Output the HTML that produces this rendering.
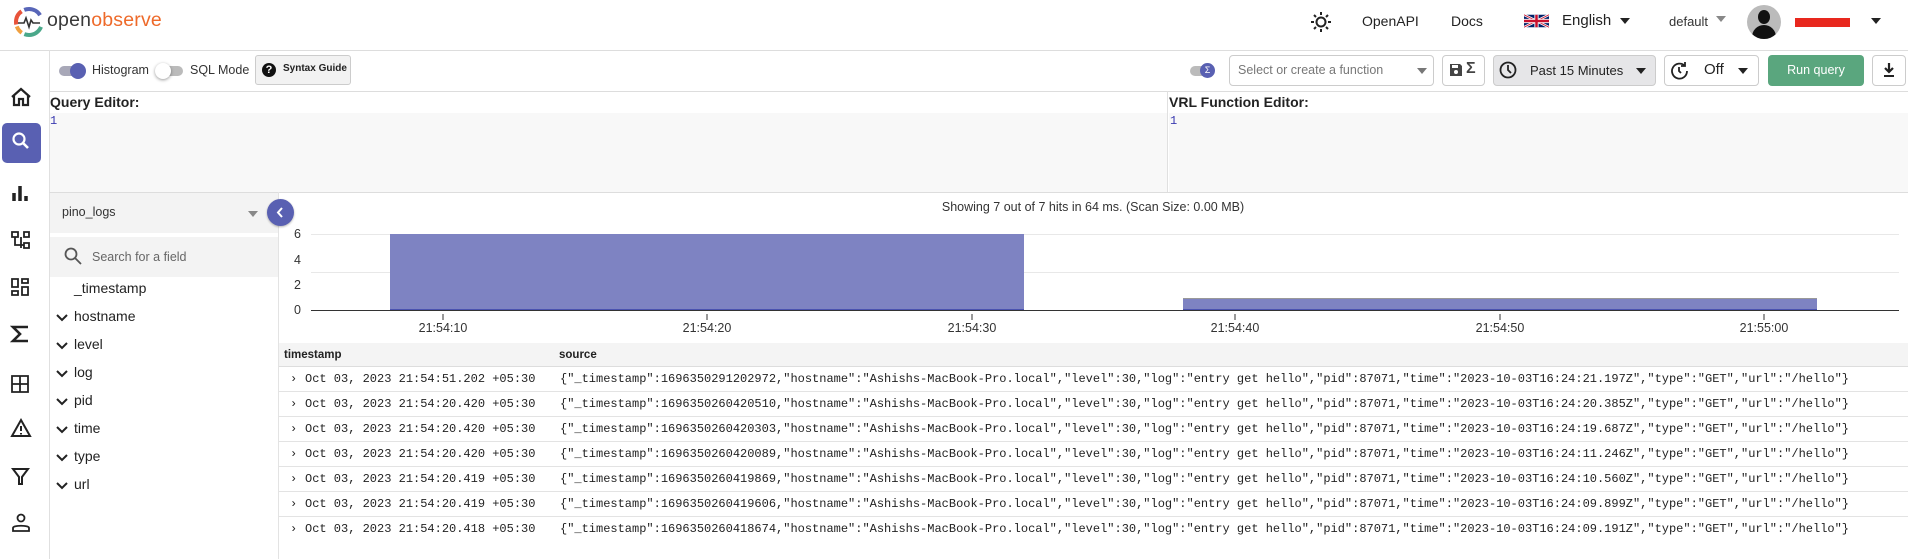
<!DOCTYPE html>
<html><head><meta charset="utf-8"><style>
*{margin:0;padding:0;box-sizing:border-box}
body{width:1908px;height:559px;overflow:hidden;background:#fff;font-family:"Liberation Sans",sans-serif;color:#222;position:relative}
.a{position:absolute}
.mono{font-family:"Liberation Mono",monospace;font-size:12px;color:#222;white-space:pre;line-height:25px;position:absolute}
.fld{position:absolute;left:56px;font-size:14px;color:#222}
.row{position:absolute;left:279px;width:1629px;height:25px;border-bottom:1px solid #e3e3e3}
</style></head><body>
<!-- header -->
<svg class="a" style="left:13px;top:6px" width="32" height="32" viewBox="0 0 32 32">
<circle cx="16" cy="16" r="13" fill="none" stroke="#4aa88a" stroke-width="4" stroke-dasharray="20 62" stroke-dashoffset="-5"/>
<circle cx="16" cy="16" r="13" fill="none" stroke="#e8533a" stroke-width="4" stroke-dasharray="15 67" stroke-dashoffset="-38"/>
<circle cx="16" cy="16" r="13" fill="none" stroke="#5866b8" stroke-width="4" stroke-dasharray="18 64" stroke-dashoffset="-56"/>
<circle cx="16" cy="16" r="13" fill="none" stroke="#f0a040" stroke-width="4" stroke-dasharray="8 74" stroke-dashoffset="-28"/>
<path d="M5 17h6l2-5 3 9 2-7 2 3h7" fill="none" stroke="#333" stroke-width="1.6"/>
</svg>
<div class="a" style="left:47px;top:9px;font-size:19.5px;letter-spacing:0.2px"><span style="color:#3a3a3a">open</span><span style="color:#ee6a2a">observe</span></div>
<svg class="a" style="left:1310px;top:11px" width="22" height="22" viewBox="0 0 22 22"><circle cx="11" cy="11" r="4.5" fill="none" stroke="#222" stroke-width="2"/><g stroke="#222" stroke-width="2"><path d="M11 1v3M11 18v3M1 11h3M18 11h3M4 4l2 2M16 16l2 2M4 18l2-2M16 6l2-2"/></g></svg>
<div class="a" style="left:1362px;top:13px;font-size:14px">OpenAPI</div>
<div class="a" style="left:1451px;top:13px;font-size:14px">Docs</div>
<svg class="a" style="left:1524px;top:12px" width="25" height="18" viewBox="0 0 60 30"><rect width="60" height="30" fill="#012169"/><path d="M0 0L60 30M60 0L0 30" stroke="#fff" stroke-width="6"/><path d="M0 0L60 30M60 0L0 30" stroke="#C8102E" stroke-width="2"/><path d="M30 0v30M0 15h60" stroke="#fff" stroke-width="10"/><path d="M30 0v30M0 15h60" stroke="#C8102E" stroke-width="6"/></svg>
<div class="a" style="left:1562px;top:12px;font-size:15px">English</div>
<div class="a" style="left:1620px;top:18px;border:5px solid transparent;border-top:6px solid #222"></div>
<div class="a" style="left:1669px;top:14px;font-size:13px;color:#333">default</div>
<div class="a" style="left:1716px;top:16px;border:5px solid transparent;border-top:6px solid #888"></div>
<div class="a" style="left:1747px;top:5px;width:34px;height:34px;border-radius:50%;background:#bbb;overflow:hidden"><div class="a" style="left:11px;top:5px;width:12px;height:14px;border-radius:50%;background:#111"></div><div class="a" style="left:5px;top:20px;width:24px;height:18px;border-radius:12px 12px 0 0;background:#111"></div></div>
<div class="a" style="left:1795px;top:18px;width:55px;height:9px;background:#e8281e"></div>
<div class="a" style="left:1871px;top:18px;border:5px solid transparent;border-top:6px solid #222"></div>
<div class="a" style="left:0;top:50px;width:1908px;height:1px;background:#ddd"></div>
<!-- sidebar -->
<div class="a" style="left:49px;top:50px;width:1px;height:509px;background:#e0e0e0"></div>
<div class="a" style="left:2px;top:123px;width:39px;height:40px;border-radius:5px;background:#5960b2"></div>
<svg class="a" style="left:0;top:80px" width="42" height="470" viewBox="0 0 42 470" fill="none" stroke="#222" stroke-width="2.2">
<path d="M12 17l9-8 9 8M14 15v10h5v-6h4v6h5V15"/>
<circle cx="19" cy="59" r="5.5" stroke="#fff"/><path d="M23 63l5 5" stroke="#fff" stroke-width="2.6"/>
<path d="M14 121v-8M20 121v-15M26 121v-5" stroke-width="3.5"/>
<path d="M12 152h6v5h-6zM24 152h5v5h-5zM24 163h5v5h-5zM15 157v8h9M21 157v11" stroke-width="1.8"/>
<path d="M12 199h6v8h-6zM22 199h6v4h-6zM12 211h6v4h-6zM22 207h6v8h-6z" stroke-width="1.8"/>
<path d="M28 247H13l7 7-7 7h15" stroke-width="2.6"/>
<path d="M12 296h16v16H12zM20 296v16M12 304h16" stroke-width="1.8"/>
<path d="M21 340l9 16H12z M21 346v5M21 353v1.5" stroke-width="2"/>
<path d="M13 389h15l-6 8v7h-3v-7z" stroke-width="2"/>
<circle cx="21" cy="438" r="3.5" stroke-width="1.8"/><path d="M13 451v-3c0-3 16-3 16 0v3z" stroke-width="1.8"/>
</svg>
<!-- toolbar -->
<div class="a" style="left:59px;top:66px;width:26px;height:10px;border-radius:5px;background:#a8a8b8"></div>
<div class="a" style="left:70px;top:63px;width:16px;height:16px;border-radius:50%;background:#5960b2"></div>
<div class="a" style="left:92px;top:63px;font-size:12.5px;color:#333">Histogram</div>
<div class="a" style="left:157px;top:66px;width:26px;height:10px;border-radius:5px;background:#bbb"></div>
<div class="a" style="left:155px;top:63px;width:16px;height:16px;border-radius:50%;background:#fff;box-shadow:0 1px 3px rgba(0,0,0,.4)"></div>
<div class="a" style="left:190px;top:63px;font-size:12.5px;color:#333">SQL Mode</div>
<div class="a" style="left:255px;top:55px;width:96px;height:30px;border:1px solid #ccc;border-radius:3px;background:#f2f2f2"></div>
<div class="a" style="left:262px;top:63px;width:14px;height:14px;border-radius:50%;background:#111;color:#fff;font-size:11px;font-weight:bold;text-align:center;line-height:14px">?</div>
<div class="a" style="left:283px;top:63px;font-size:10px;font-weight:bold;color:#222">Syntax Guide</div>
<div class="a" style="left:1190px;top:66px;width:20px;height:10px;border-radius:5px;background:#bbb"></div>
<div class="a" style="left:1200px;top:63px;width:15px;height:15px;border-radius:50%;background:#5960b2;color:#fff;font-size:9px;text-align:center;line-height:15px">Σ</div>
<div class="a" style="left:1229px;top:55px;width:205px;height:31px;border:1px solid #ccc;border-radius:4px"></div>
<div class="a" style="left:1238px;top:63px;font-size:12.5px;color:#777">Select or create a function</div>
<div class="a" style="left:1417px;top:68px;border:5px solid transparent;border-top:6px solid #777"></div>
<div class="a" style="left:1442px;top:55px;width:43px;height:31px;border:1px solid #ccc;border-radius:4px"></div>
<svg class="a" style="left:1449px;top:63px" width="14" height="14" viewBox="0 0 14 14"><path d="M1 1h10l2 2v10H1z" fill="#444"/><rect x="3" y="2" width="6" height="3" fill="#fff"/><circle cx="7" cy="9" r="2" fill="#fff"/></svg>
<div class="a" style="left:1466px;top:60px;font-size:16px;font-weight:bold;color:#444">Σ</div>
<div class="a" style="left:1493px;top:55px;width:163px;height:31px;border:1px solid #ccc;border-radius:4px;background:#e6e6e8"></div>
<svg class="a" style="left:1499px;top:61px" width="18" height="18" viewBox="0 0 18 18" fill="none" stroke="#222" stroke-width="1.8"><circle cx="9" cy="9" r="7.5"/><path d="M9 4v5l3 3"/></svg>
<div class="a" style="left:1530px;top:63px;font-size:13px;color:#222">Past 15 Minutes</div>
<div class="a" style="left:1636px;top:68px;border:5px solid transparent;border-top:6px solid #222"></div>
<div class="a" style="left:1664px;top:55px;width:95px;height:31px;border:1px solid #ccc;border-radius:4px"></div>
<svg class="a" style="left:1670px;top:61px" width="19" height="19" viewBox="0 0 19 19" fill="none" stroke="#222" stroke-width="1.8"><path d="M15 5A7.5 7.5 0 1 0 17 10"/><path d="M15 1v4h-4"/><path d="M9 6v4l2 2"/></svg>
<div class="a" style="left:1704px;top:61px;font-size:15px;color:#222">Off</div>
<div class="a" style="left:1738px;top:68px;border:5px solid transparent;border-top:6px solid #222"></div>
<div class="a" style="left:1768px;top:55px;width:96px;height:31px;border-radius:4px;background:#5aa67e;color:#fff;font-size:12.5px;text-align:center;line-height:31px">Run query</div>
<div class="a" style="left:1872px;top:55px;width:34px;height:31px;border:1px solid #ccc;border-radius:4px"></div>
<svg class="a" style="left:1882px;top:62px" width="14" height="16" viewBox="0 0 14 16"><path d="M7 1v9M3 6l4 4 4-4" stroke="#222" stroke-width="2.2" fill="none"/><path d="M2 14h10" stroke="#222" stroke-width="2"/></svg>
<div class="a" style="left:49px;top:91px;width:1859px;height:1px;background:#ddd"></div>
<!-- editors -->
<div class="a" style="left:50px;top:94px;font-size:14px;font-weight:bold;color:#222">Query Editor:</div>
<div class="a" style="left:1169px;top:94px;font-size:14px;font-weight:bold;color:#222">VRL Function Editor:</div>
<div class="a" style="left:50px;top:113px;width:1117px;height:79px;background:#f8f8f8"></div>
<div class="a" style="left:1169px;top:113px;width:739px;height:79px;background:#f8f8f8"></div>
<div class="a" style="left:1167px;top:91px;width:1px;height:101px;background:#e0e0e0"></div>
<div class="a" style="left:50px;top:114px;color:#3a3ab0;font-family:'Liberation Mono',monospace;font-size:12px">1</div>
<div class="a" style="left:1170px;top:114px;color:#3a3ab0;font-family:'Liberation Mono',monospace;font-size:12px">1</div>
<div class="a" style="left:49px;top:192px;width:1859px;height:1px;background:#ddd"></div>
<!-- field list -->
<div class="a" style="left:50px;top:193px;width:228px;height:40px;background:#f3f3f3"></div>
<div class="a" style="left:62px;top:205px;font-size:12.5px;color:#333">pino_logs</div>
<div class="a" style="left:248px;top:211px;border:5px solid transparent;border-top:6px solid #888"></div>
<div class="a" style="left:50px;top:237px;width:228px;height:40px;background:#f3f3f3"></div>
<svg class="a" style="left:64px;top:247px" width="18" height="18" viewBox="0 0 18 18" fill="none" stroke="#555" stroke-width="1.8"><circle cx="7" cy="7" r="5.5"/><path d="M11 11l6 6"/></svg>
<div class="a" style="left:92px;top:250px;font-size:12.5px;color:#666">Search for a field</div>
<div class="a" style="left:278px;top:192px;width:1px;height:367px;background:#e3e3e3"></div>
<div class="a" style="left:267px;top:199px;width:27px;height:27px;border-radius:50%;background:#5960b2;box-shadow:0 1px 2px rgba(0,0,0,.3)"></div>
<svg class="a" style="left:274px;top:206px" width="13" height="13" viewBox="0 0 13 13"><path d="M8 2L4 6.5 8 11" stroke="#fff" stroke-width="2" fill="none"/></svg>
<div class="fld" style="top:280px;left:74px">_timestamp</div>
<div style="position:absolute;left:56px;top:308px">
<svg class="a" style="left:0;top:5px" width="12" height="9"><path d="M1 2l5 5 5-5" stroke="#222" stroke-width="2" fill="none"/></svg>
<svg class="a" style="left:0;top:33px" width="12" height="9"><path d="M1 2l5 5 5-5" stroke="#222" stroke-width="2" fill="none"/></svg>
<svg class="a" style="left:0;top:61px" width="12" height="9"><path d="M1 2l5 5 5-5" stroke="#222" stroke-width="2" fill="none"/></svg>
<svg class="a" style="left:0;top:89px" width="12" height="9"><path d="M1 2l5 5 5-5" stroke="#222" stroke-width="2" fill="none"/></svg>
<svg class="a" style="left:0;top:117px" width="12" height="9"><path d="M1 2l5 5 5-5" stroke="#222" stroke-width="2" fill="none"/></svg>
<svg class="a" style="left:0;top:145px" width="12" height="9"><path d="M1 2l5 5 5-5" stroke="#222" stroke-width="2" fill="none"/></svg>
<svg class="a" style="left:0;top:173px" width="12" height="9"><path d="M1 2l5 5 5-5" stroke="#222" stroke-width="2" fill="none"/></svg>
</div>
<div class="fld" style="top:308px;left:74px">hostname</div>
<div class="fld" style="top:336px;left:74px">level</div>
<div class="fld" style="top:364px;left:74px">log</div>
<div class="fld" style="top:392px;left:74px">pid</div>
<div class="fld" style="top:420px;left:74px">time</div>
<div class="fld" style="top:448px;left:74px">type</div>
<div class="fld" style="top:476px;left:74px">url</div>
<!-- chart -->
<div class="a" style="left:923px;top:200px;width:340px;text-align:center;font-size:12.5px;color:#333">Showing 7 out of 7 hits in 64 ms. (Scan Size: 0.00 MB)</div>
<svg class="a" style="left:279px;top:225px" width="1629" height="118" viewBox="0 0 1629 118">
<g stroke="#e8e8e8" stroke-width="1"><path d="M32 9.5H1620M32 47.5H1620M32 85.5H1620"/></g>
<rect x="111" y="9" width="634" height="76" fill="#7e83c2"/>
<rect x="904" y="73" width="634" height="12" fill="#7e83c2"/>
<path d="M904 73.5h634" stroke="#999"/>
<path d="M32 85.5H1620" stroke="#333"/>
<path d="M111 84.5h634M904 84.5h634" stroke="#4a52b0"/>
<g stroke="#333"><path d="M164 89v6M428 89v6M693 89v6M956 89v6M1221 89v6M1485 89v6"/></g>
<g font-family="Liberation Sans" font-size="12.5" fill="#333" text-anchor="middle">
<text x="164" y="107">21:54:10</text><text x="428" y="107">21:54:20</text><text x="693" y="107">21:54:30</text><text x="956" y="107">21:54:40</text><text x="1221" y="107">21:54:50</text><text x="1485" y="107">21:55:00</text>
</g>
</svg>
<div class="a" style="left:294px;top:228px;font-size:12.5px;color:#333;line-height:12px">6</div>
<div class="a" style="left:294px;top:254px;font-size:12.5px;color:#333;line-height:12px">4</div>
<div class="a" style="left:294px;top:279px;font-size:12.5px;color:#333;line-height:12px">2</div>
<div class="a" style="left:294px;top:304px;font-size:12.5px;color:#333;line-height:12px">0</div>
<!-- table -->
<div class="a" style="left:279px;top:343px;width:1629px;height:24px;background:#f4f4f4;border-bottom:1px solid #ddd"></div>
<div class="a" style="left:284px;top:349px;font-size:11.5px;font-weight:bold;color:#222">timestamp</div>
<div class="a" style="left:559px;top:349px;font-size:11.5px;font-weight:bold;color:#222">source</div>
<div class="row" style="top:367px"></div><div class="row" style="top:392px"></div><div class="row" style="top:417px"></div><div class="row" style="top:442px"></div><div class="row" style="top:467px"></div><div class="row" style="top:492px"></div>
<div class="mono" style="left:290px;top:367px">›
›
›
›
›
›
›</div>
<div class="mono" style="left:305px;top:367px">Oct 03, 2023 21:54:51.202 +05:30
Oct 03, 2023 21:54:20.420 +05:30
Oct 03, 2023 21:54:20.420 +05:30
Oct 03, 2023 21:54:20.420 +05:30
Oct 03, 2023 21:54:20.419 +05:30
Oct 03, 2023 21:54:20.419 +05:30
Oct 03, 2023 21:54:20.418 +05:30</div>
<div class="mono" style="left:560px;top:367px">{"_timestamp":1696350291202972,"hostname":"Ashishs-MacBook-Pro.local","level":30,"log":"entry get hello","pid":87071,"time":"2023-10-03T16:24:21.197Z","type":"GET","url":"/hello"}
{"_timestamp":1696350260420510,"hostname":"Ashishs-MacBook-Pro.local","level":30,"log":"entry get hello","pid":87071,"time":"2023-10-03T16:24:20.385Z","type":"GET","url":"/hello"}
{"_timestamp":1696350260420303,"hostname":"Ashishs-MacBook-Pro.local","level":30,"log":"entry get hello","pid":87071,"time":"2023-10-03T16:24:19.687Z","type":"GET","url":"/hello"}
{"_timestamp":1696350260420089,"hostname":"Ashishs-MacBook-Pro.local","level":30,"log":"entry get hello","pid":87071,"time":"2023-10-03T16:24:11.246Z","type":"GET","url":"/hello"}
{"_timestamp":1696350260419869,"hostname":"Ashishs-MacBook-Pro.local","level":30,"log":"entry get hello","pid":87071,"time":"2023-10-03T16:24:10.560Z","type":"GET","url":"/hello"}
{"_timestamp":1696350260419606,"hostname":"Ashishs-MacBook-Pro.local","level":30,"log":"entry get hello","pid":87071,"time":"2023-10-03T16:24:09.899Z","type":"GET","url":"/hello"}
{"_timestamp":1696350260418674,"hostname":"Ashishs-MacBook-Pro.local","level":30,"log":"entry get hello","pid":87071,"time":"2023-10-03T16:24:09.191Z","type":"GET","url":"/hello"}</div>
</body></html>
